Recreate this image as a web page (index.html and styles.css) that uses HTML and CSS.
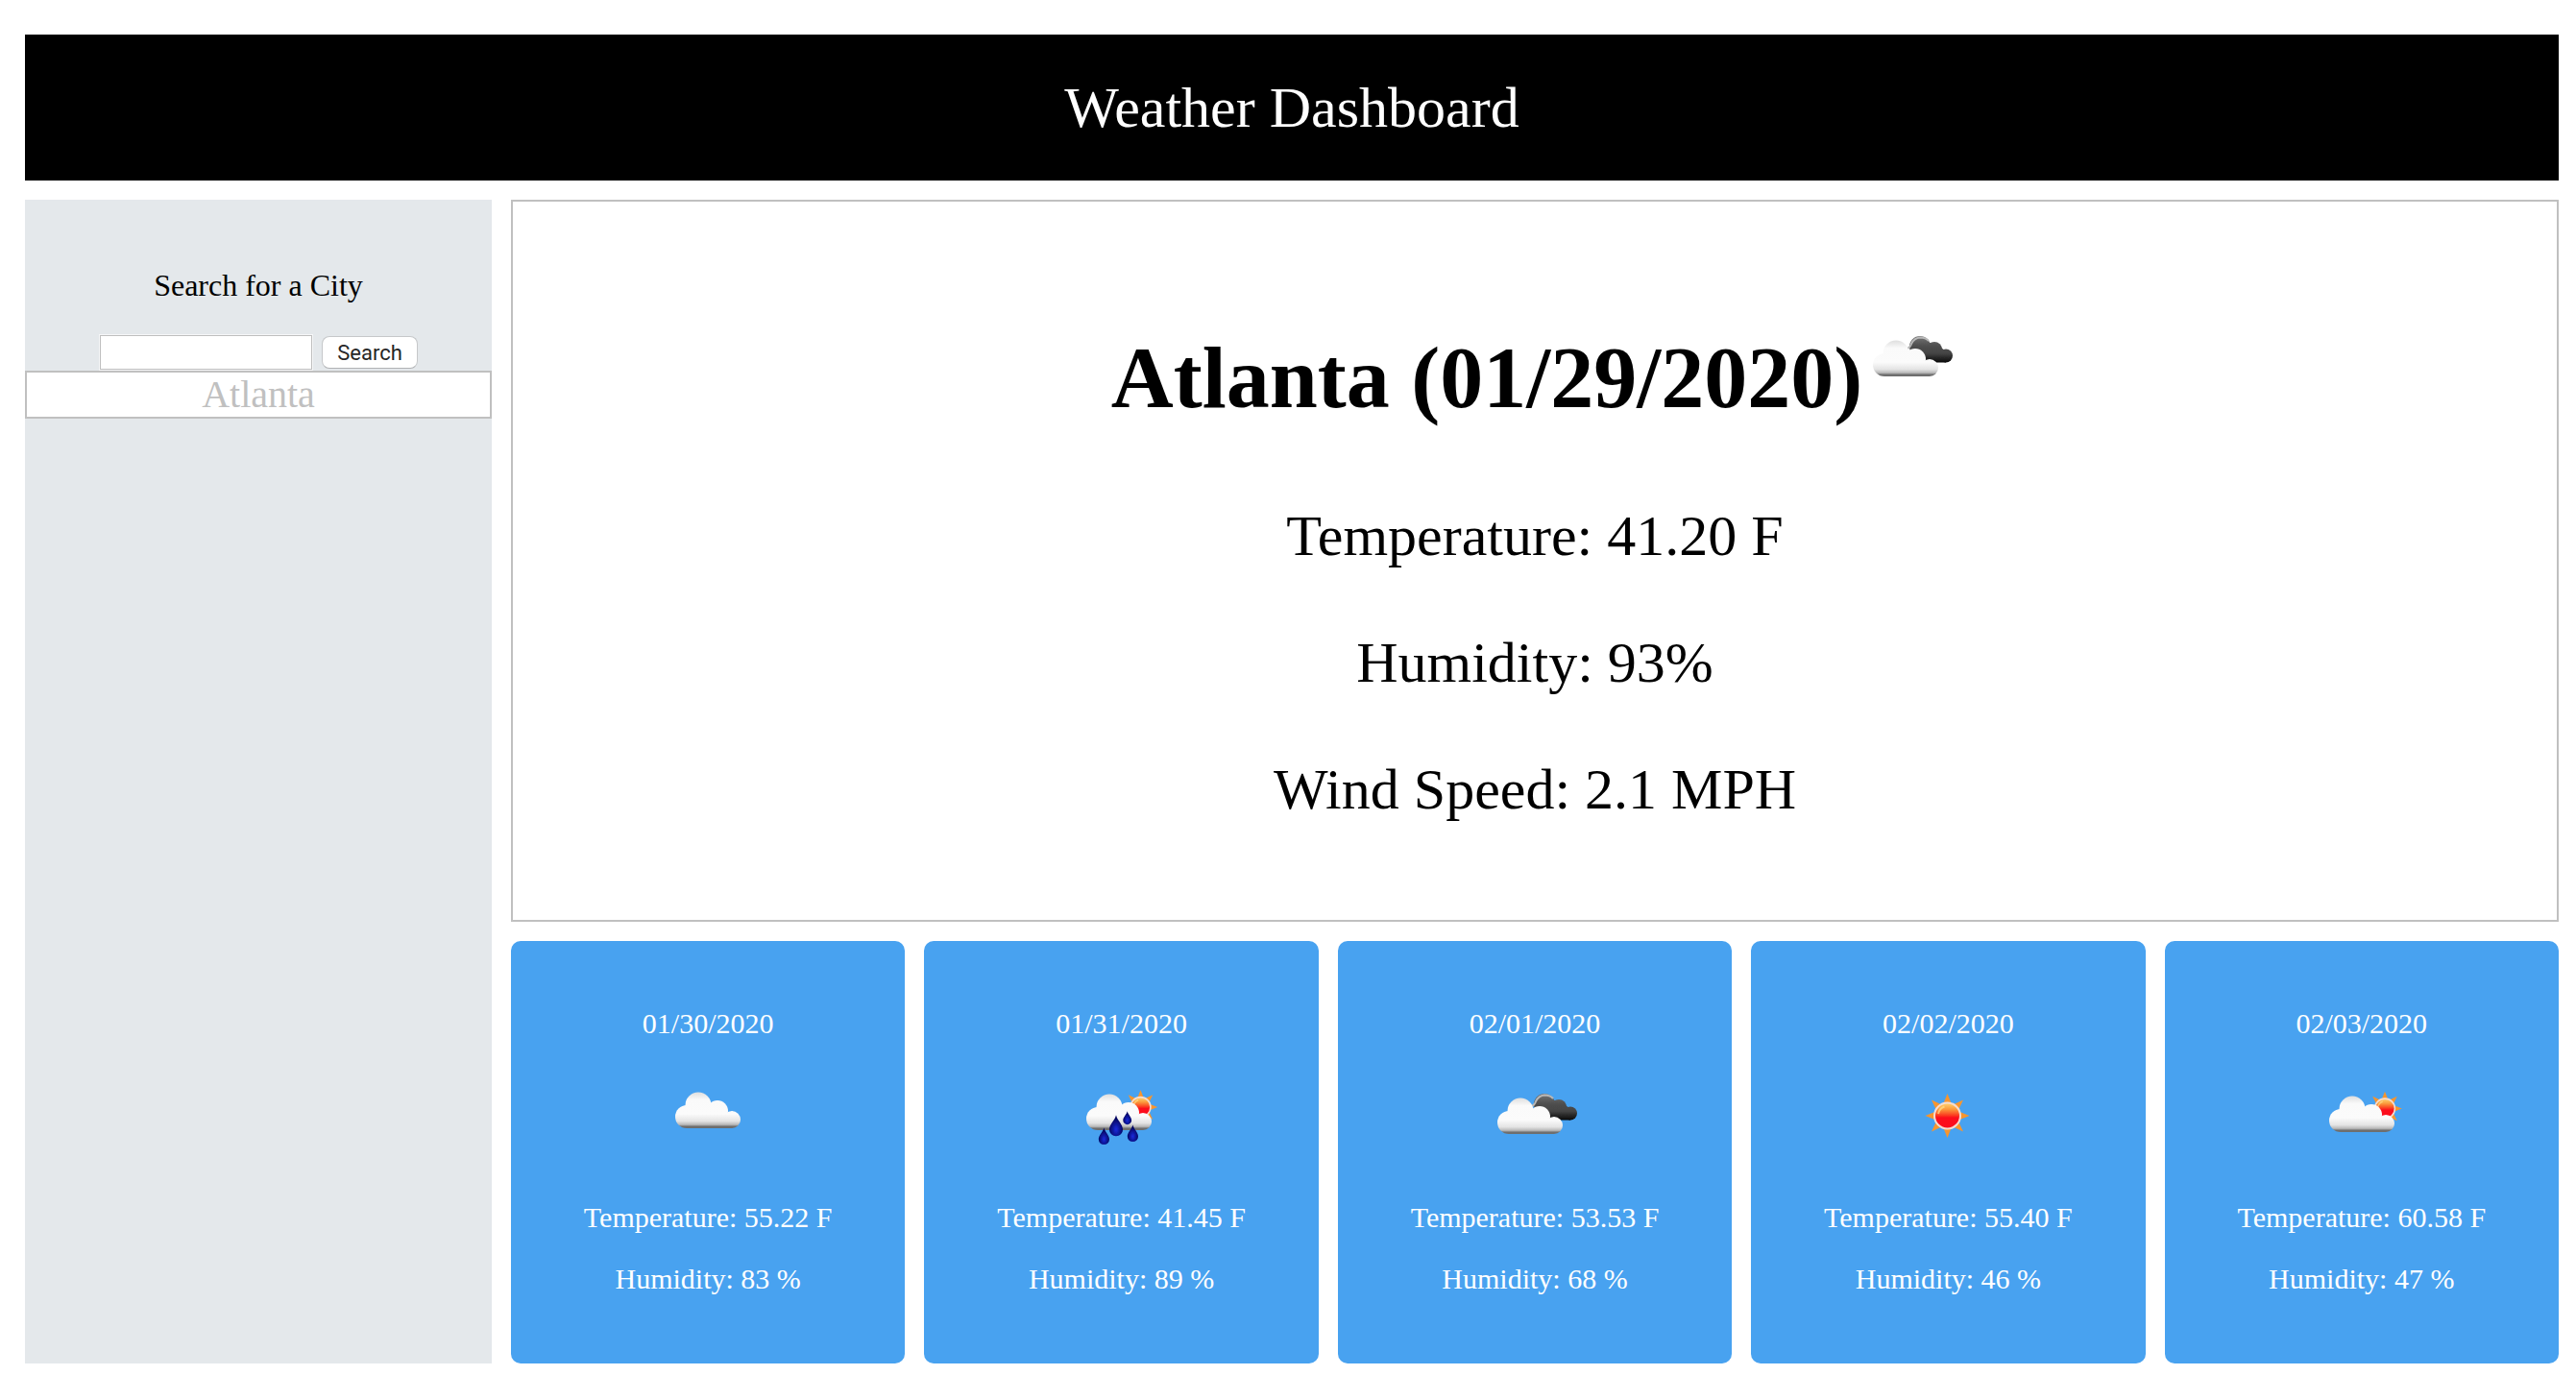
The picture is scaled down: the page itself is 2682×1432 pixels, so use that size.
FILE: index.html
```html
<!DOCTYPE html>
<html lang="en">
<head>
  <meta charset="utf-8">
  <meta name="viewport" content="width=device-width, initial-scale=1">
  <title>Weather Dashboard</title>
  <link rel="stylesheet" href="styles.css">
</head>
<body>
  <!-- Shared weather icon parts -->
  <svg class="icon-defs" width="0" height="0" aria-hidden="true">
    <defs>
      <linearGradient id="cloud-fill" gradientUnits="userSpaceOnUse" x1="0" y1="-25" x2="0" y2="12">
        <stop offset="0" stop-color="#e0e0e0"/>
        <stop offset=".2" stop-color="#fafafa"/>
        <stop offset=".6" stop-color="#fbfbfb"/>
        <stop offset=".8" stop-color="#e4e4e4"/>
        <stop offset=".9" stop-color="#b8b8b8"/>
        <stop offset=".95" stop-color="#6e6e6e"/>
        <stop offset="1" stop-color="#6e6e6e"/>
      </linearGradient>
      <linearGradient id="dark-fill" gradientUnits="userSpaceOnUse" x1="0" y1="26" x2="0" y2="54">
        <stop offset="0" stop-color="#777"/>
        <stop offset=".35" stop-color="#505050"/>
        <stop offset=".65" stop-color="#444"/>
        <stop offset="1" stop-color="#050505"/>
      </linearGradient>
      <linearGradient id="sun-fill" x1="0" y1="0" x2="0" y2="1">
        <stop offset="0" stop-color="#ffd873"/>
        <stop offset=".25" stop-color="#fb9a3c"/>
        <stop offset=".45" stop-color="#fb4a24"/>
        <stop offset=".58" stop-color="#fc0d1b"/>
        <stop offset="1" stop-color="#fb1020"/>
      </linearGradient>
      <radialGradient id="drop-fill" cx=".5" cy=".68" r=".5">
        <stop offset="0" stop-color="#1a2bdc"/>
        <stop offset="1" stop-color="#020560"/>
      </radialGradient>
      <filter id="soft" x="-20%" y="-20%" width="140%" height="140%">
        <feGaussianBlur stdDeviation=".7"/>
      </filter>
      <g id="cloud" fill="url(#cloud-fill)">
        <circle r="12"/>
        <circle cx="12" cy="-12" r="13.500"/>
        <circle cx="32" cy="-6" r="11"/>
        <circle cx="47" cy="3" r="9"/>
        <path d="M0-8H36L47 3V12H0Z"/>
      </g>
      <g id="sun">
        <path fill="#f7952f" d="M0-23 4-13H-4ZM0 23 4 13H-4ZM23 0 13-4V4ZM-23 0-13-4V4ZM16.500-16.500 12-7 7-12ZM16.500 16.500 12 7 7 12ZM-16.500 16.500-12 7-7 12ZM-16.500-16.500-12-7-7-12Z"/>
        <circle r="13.500" fill="url(#sun-fill)" stroke="#f5dcd0" stroke-width="2"/>
        <path d="M-9.500-2A10 10 0 0 1-3-9.500" fill="none" stroke="#ffe08a" stroke-width="2" opacity=".7"/>
      </g>
      <path id="drop" fill="url(#drop-fill)" d="M0-10C1-5 6.500-1 6.500 4A6.500 6.500 0 0 1-6.500 4C-6.500-1-1-5 0-10Z"/>
      <g id="icon-cloudy" filter="url(#soft)">
        <use href="#cloud" x="28" y="50"/>
      </g>
      <g id="icon-broken" filter="url(#soft)">
        <g fill="url(#dark-fill)">
          <circle cx="60" cy="37" r="11"/>
          <circle cx="75" cy="40" r="8"/>
          <circle cx="87" cy="46.500" r="7"/>
          <path d="M60 33H76L87 42V53.500H60Z"/>
        </g>
        <path fill="none" stroke="#b8b8b8" stroke-width="2" d="M45 40Q50 38 51 34Q54 28 60 27.500Q66 27.500 69 31"/>
        <use href="#cloud" x="23" y="56"/>
      </g>
      <g id="icon-rain" filter="url(#soft)">
        <use href="#sun" transform="translate(69.500 40) scale(.77)"/>
        <use href="#cloud" x="25" y="52"/>
        <use href="#drop" transform="translate(31.400 70) scale(.86)"/>
        <use href="#drop" transform="translate(44 59) scale(1.080)"/>
        <use href="#drop" transform="translate(55.700 51) scale(.68)"/>
        <use href="#drop" transform="translate(61.400 67) scale(.86)"/>
      </g>
      <g id="icon-sunny" filter="url(#soft)">
        <use href="#sun" x="49.500" y="49"/>
      </g>
      <g id="icon-partly" filter="url(#soft)">
        <use href="#sun" transform="translate(74 41.500) scale(.77)"/>
        <use href="#cloud" x="28" y="54"/>
      </g>
    </defs>
  </svg>

  <div class="page">
    <header class="banner">
      <h1 class="banner-title">Weather Dashboard</h1>
    </header>

    <div class="layout">
      <aside class="sidebar">
        <form class="search">
          <label class="search-label" for="city">Search for a City</label>
          <div class="search-row">
            <input class="search-input" id="city" name="city" type="text">
            <button class="search-button" type="button">Search</button>
          </div>
        </form>
        <button class="history-item" type="button">Atlanta</button>
      </aside>

      <main class="content">
        <section class="current">
          <h2 class="current-title">Atlanta (01/29/2020)<svg class="icon" viewBox="0 0 100 100" role="img" aria-label="Broken clouds"><use href="#icon-broken"/></svg></h2>
          <p class="current-line">Temperature: 41.20 F</p>
          <p class="current-line">Humidity: 93%</p>
          <p class="current-line">Wind Speed: 2.1 MPH</p>
        </section>

        <section class="forecast">
          <article class="card">
            <p class="card-line">01/30/2020</p>
            <svg class="icon card-icon" viewBox="0 0 100 100" role="img" aria-label="Cloudy"><use href="#icon-cloudy"/></svg>
            <p class="card-line">Temperature: 55.22 F</p>
            <p class="card-line">Humidity: 83 %</p>
          </article>
          <article class="card">
            <p class="card-line">01/31/2020</p>
            <svg class="icon card-icon" viewBox="0 0 100 100" role="img" aria-label="Rain"><use href="#icon-rain"/></svg>
            <p class="card-line">Temperature: 41.45 F</p>
            <p class="card-line">Humidity: 89 %</p>
          </article>
          <article class="card">
            <p class="card-line">02/01/2020</p>
            <svg class="icon card-icon" viewBox="0 0 100 100" role="img" aria-label="Broken clouds"><use href="#icon-broken"/></svg>
            <p class="card-line">Temperature: 53.53 F</p>
            <p class="card-line">Humidity: 68 %</p>
          </article>
          <article class="card">
            <p class="card-line">02/02/2020</p>
            <svg class="icon card-icon" viewBox="0 0 100 100" role="img" aria-label="Sunny"><use href="#icon-sunny"/></svg>
            <p class="card-line">Temperature: 55.40 F</p>
            <p class="card-line">Humidity: 46 %</p>
          </article>
          <article class="card">
            <p class="card-line">02/03/2020</p>
            <svg class="icon card-icon" viewBox="0 0 100 100" role="img" aria-label="Partly cloudy"><use href="#icon-partly"/></svg>
            <p class="card-line">Temperature: 60.58 F</p>
            <p class="card-line">Humidity: 47 %</p>
          </article>
        </section>
      </main>
    </div>
  </div>
</body>
</html>
```

FILE: styles.css
```css
* {
  box-sizing: border-box;
}

body {
  margin: 0;
  background: #fff;
  color: #000;
  font-family: "Liberation Serif", "Times New Roman", serif;
}

h1,
h2,
p {
  margin: 0;
}

.icon-defs {
  position: absolute;
}

.page {
  display: flex;
  flex-direction: column;
  gap: 20px;
  padding: 36px 18px 12px 26px;
}

.banner {
  padding: 40px;
  background: #000;
  color: #fff;
  text-align: center;
}

.banner-title {
  font-size: 60px;
  font-weight: 400;
  line-height: 72px;
}

.layout {
  display: grid;
  grid-template-columns: 486px minmax(0, 1fr);
  gap: 20px;
}

.sidebar {
  padding-top: 71px;
  background: #e4e8eb;
}

.search {
  display: flex;
  flex-direction: column;
  align-items: center;
  gap: 33px;
}

.search-label {
  font-size: 32px;
  line-height: 36px;
}

.search-row {
  display: flex;
  align-items: center;
  gap: 9px;
}

.search-input {
  width: 223px;
  height: 38px;
  padding: 4px 8px;
  border: 1px solid #f6f7f8;
  background: #fff;
  box-shadow: inset 0 0 0 1px #bfbfbf;
  font-size: 22px;
}

.search-button {
  width: 100px;
  height: 34px;
  padding: 0;
  border: 1px solid #c6c8ca;
  border-bottom-color: #b0b2b4;
  border-radius: 8px;
  background: #fff;
  color: #262626;
  font-family: Roboto, "Liberation Sans", sans-serif;
  font-size: 22px;
  line-height: 34px;
}

.history-item {
  display: block;
  width: 100%;
  padding: 0;
  border: 2px solid #c0c0c0;
  background: #fff;
  color: #c0c0c0;
  font-family: inherit;
  font-size: 40px;
  line-height: 46px;
}

.content {
  display: flex;
  flex-direction: column;
  gap: 20px;
}

.current {
  display: flex;
  flex-direction: column;
  gap: 60px;
  padding: 114px 40px 100px;
  border: 2px solid #c0c0c0;
  text-align: center;
}

.current-title {
  font-size: 90px;
  line-height: 136px;
}

.current-line {
  font-size: 60px;
  line-height: 72px;
}

.icon {
  width: 100px;
  height: 100px;
}

.forecast {
  display: grid;
  grid-template-columns: repeat(5, minmax(0, 1fr));
  gap: 20px;
}

.card {
  display: flex;
  flex-direction: column;
  align-items: center;
  gap: 30px;
  padding: 69px 20px 71px;
  border-radius: 10px;
  background: #48a2f0;
  color: #fff;
  text-align: center;
}

.card-icon {
  margin-bottom: 8px;
}

.card-line {
  font-size: 30px;
  line-height: 34px;
}
```
